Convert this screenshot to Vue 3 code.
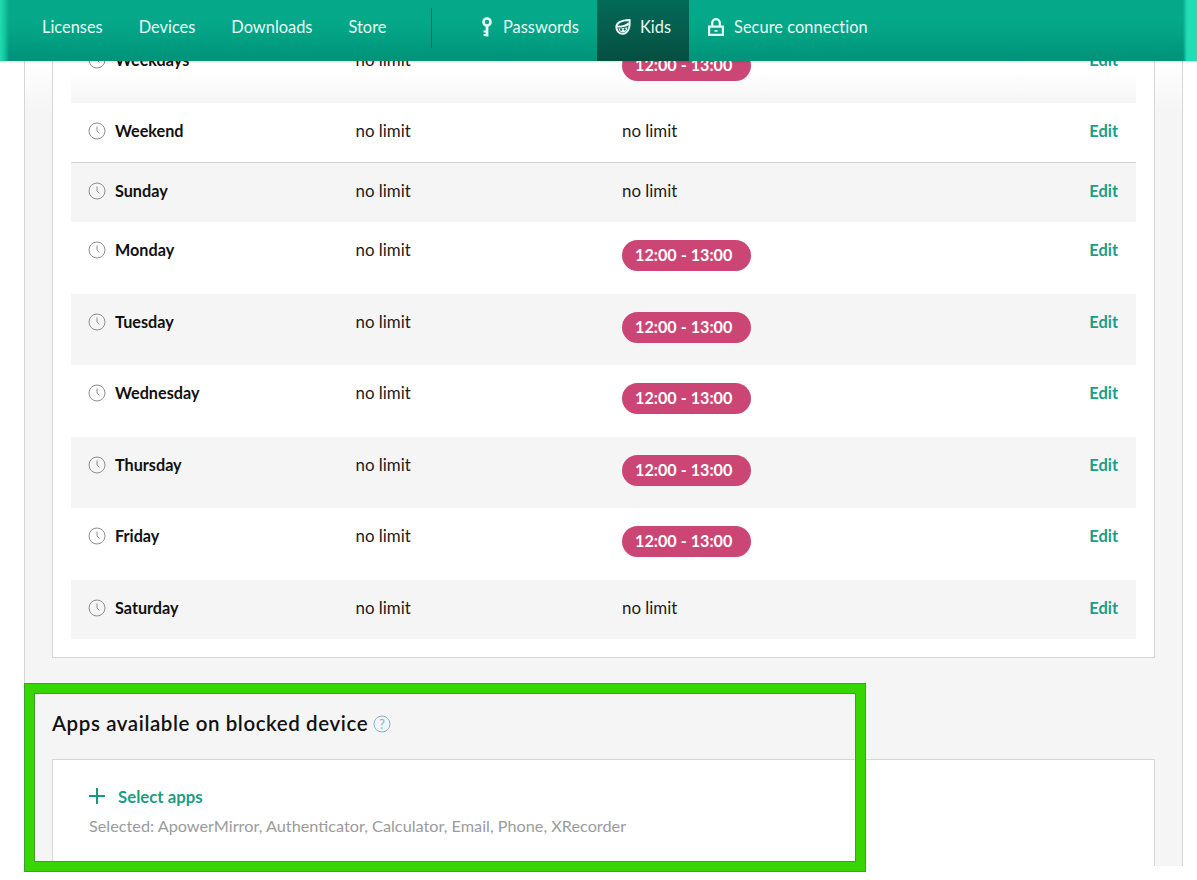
<script setup>
const rows = [
  { day: 'Weekdays', pill: true, bg: 'fade' },
  { day: 'Weekend', pill: false, bg: 'plain' },
  { day: 'Sunday', pill: false, bg: 'grey ruled' },
  { day: 'Monday', pill: true, bg: 'plain' },
  { day: 'Tuesday', pill: true, bg: 'grey' },
  { day: 'Wednesday', pill: true, bg: 'plain' },
  { day: 'Thursday', pill: true, bg: 'grey' },
  { day: 'Friday', pill: true, bg: 'plain' },
  { day: 'Saturday', pill: false, bg: 'grey' }
]
</script>

<template>
  <div class="page">
    <header class="topbar">
      <nav class="nav-main">
        <a>Licenses</a>
        <a>Devices</a>
        <a>Downloads</a>
        <a>Store</a>
      </nav>
      <span class="divider"></span>
      <nav class="nav-apps">
        <a class="app app-pass">
          <svg width="13" height="20" viewBox="0 0 13 20" fill="none" stroke="#e6fbf5">
            <circle cx="7" cy="5" r="3.500" stroke-width="2.600" />
            <path d="M7 9v10.500" stroke-width="2.800" />
            <path d="M3.500 14.500h3M3.500 18h3" stroke-width="2" />
          </svg>
          Passwords
        </a>
        <a class="app app-kids">
          <svg width="18" height="18" viewBox="0 0 18 18" fill="none">
            <path d="M1.500 9C1.500 4 6 1.500 16.500 1c.3 5 .3 8-1.300 11-1.400 2.800-3.600 4.800-6.500 4.800-4 0-7.200-3.400-7.200-7.800z" stroke="#e6fbf5" stroke-width="2.200" />
            <path d="M2 7.500c4.500.5 9.500-.5 13.500-3.800L15.800 7C12 9 7 9.800 2.500 9.500z" fill="#e6fbf5" />
            <path d="M4 10.500c3 .2 6.500-.1 10-1.200-.2 3.500-2.300 6-5 6-2.700 0-4.600-2-5-4.800z" fill="#e6fbf5" />
            <circle cx="7" cy="12" r="1.200" fill="#04604f" />
            <circle cx="11" cy="11.700" r="1.200" fill="#04604f" />
          </svg>
          Kids
        </a>
        <a class="app app-lock">
          <svg width="16" height="18" viewBox="0 0 16 18" fill="none">
            <path d="M4.200 8V5a3.800 3.800 0 0 1 7.600 0v3" stroke="#e6fbf5" stroke-width="2.300" />
            <path fill-rule="evenodd" d="M0 7.500h16V18H0zM2.200 9.700v6.100h11.600V9.700zM6.500 12h3v1.800h-3z" fill="#e6fbf5" />
          </svg>
          Secure connection
        </a>
      </nav>
    </header>

    <main class="panel">
      <section class="card schedule">
        <div v-for="row in rows" :key="row.day" class="row" :class="[row.bg, { tall: row.pill }]">
          <div class="day">
            <svg class="clock" width="18" height="18" viewBox="0 0 18 18" fill="none" stroke="#8f8f8f">
              <circle cx="9" cy="9" r="8" />
              <path d="M9 4.500V9l2.500 2.500" />
            </svg>
            {{ row.day }}
          </div>
          <div class="limit">no limit</div>
          <div class="limit">
            <span v-if="row.pill" class="pill">12:00 - 13:00</span>
            <template v-else>no limit</template>
          </div>
          <a class="edit">Edit</a>
        </div>
      </section>

      <h2 class="title">
        Apps available on blocked device
        <svg class="help" width="18" height="18" viewBox="0 0 18 18" fill="none">
          <circle cx="9" cy="9" r="8" stroke="#7db4d6" />
          <text x="9" y="13.500" text-anchor="middle" class="help-mark">?</text>
        </svg>
      </h2>

      <section class="card apps">
        <a class="select">
          <svg width="16" height="16" viewBox="0 0 16 16" stroke="#0f9c83" stroke-width="2">
            <path d="M8 0v16M0 8h16" />
          </svg>
          Select apps
        </a>
        <p class="selected">Selected: ApowerMirror, Authenticator, Calculator, Email, Phone, XRecorder</p>
      </section>
    </main>

    <div class="highlight"></div>
  </div>
</template>

<style scoped>
.page {
  position: relative;
  height: 880px;
  overflow: hidden;
  background: #fff;
  color: #111;
  font-family: Lato, "Open Sans", sans-serif;
  font-size: 16px;
}
.topbar {
  position: absolute;
  top: 0;
  left: 0;
  right: 0;
  z-index: 3;
  height: 61px;
  display: flex;
  align-items: center;
  background:
    linear-gradient(90deg, #22dcb2 0, #12c29c 5px, rgba(0,0,0,0) 9px, rgba(0,0,0,0) 1183px, #22dcb2 1187px, #22dcb2 100%),
    linear-gradient(#05a98a 0, #05a98a 20px, #00937a 100%);
  box-shadow: 0 1px 2px rgba(0, 0, 0, .15);
}
.topbar a { color: #e6fbf5; font-size: 16.400px; }
.nav-main { flex: none; display: flex; gap: 36px; width: 389px; padding: 0 0 8px 42px; box-sizing: border-box; }
.divider { flex: none; width: 1px; height: 40px; margin: -6px 0 0 42px; background: #05705e; }
.nav-apps { display: flex; align-self: stretch; }
.app { display: flex; align-items: center; gap: 10px; padding: 0 18px 8px; }
.app-pass { padding: 0 18px 8px 48px; width: 165px; box-sizing: border-box; }
.app-kids { gap: 9px; width: 92px; box-sizing: border-box; background: linear-gradient(#036a58, #064f41); }
.app-lock { padding-left: 19px; letter-spacing: .05px; }
.panel {
  box-sizing: border-box;
  width: 1159px;
  height: 866px;
  margin-left: 24px;
  padding: 0 27px;
  overflow: hidden;
  border: solid #d6d6d6;
  border-width: 0 1px;
  background: linear-gradient(#fff 61px, #f5f5f5 112px);
}
.card {
  box-sizing: border-box;
  background: #fff;
  border: 1px solid #d6d6d6;
}
.schedule {
  height: 658px;
  border-top: 0;
  padding: 31.200px 18px 0;
}
.row {
  box-sizing: border-box;
  height: 59.600px;
  display: grid;
  grid-template-columns: 266.500px 266.500px 1fr auto;
  padding: 18px 18px 0;
  line-height: 20px;
}
.row.tall { height: 71.600px; }
.row:last-child { height: 59px; }
.row.plain { background: #fff; }
.row.grey { background: #f5f5f5; }
.row.fade { padding-top: 19px; background: linear-gradient(#fff 40px, #f5f5f5 100%); }
.row.ruled { padding-top: 17.500px; border-top: 1px solid #d2d2d2; }
.day { display: flex; align-items: flex-start; gap: 9px; font-weight: 700; font-size: 16.200px; }
.clock { margin: 1px 0 0 -1px; flex: none; }
.limit { font-size: 16.900px; color: #1c1c1c; }
.pill {
  display: block;
  box-sizing: border-box;
  width: 129px;
  height: 31px;
  padding-left: 13px;
  border-radius: 16px;
  background: #cb4674;
  color: #fff;
  font-size: 16.200px;
  font-weight: 700;
  line-height: 29px;
}
.edit { color: #1d9d85; font-size: 16.400px; font-weight: 700; }
.title {
  display: flex;
  align-items: center;
  gap: 5px;
  height: 24px;
  margin: 53px 0 24px;
  font-size: 20.500px;
  font-weight: 600;
  letter-spacing: .58px;
  color: #111;
}
.help { margin-top: 2px; }
.help-mark { font-size: 13px; letter-spacing: 0; fill: #7db4d6; font-family: Lato, sans-serif; font-weight: 400; }
.apps {
  height: 120px;
  padding: 26px 36px;
  border-bottom: 0;
}
.select {
  display: flex;
  align-items: center;
  gap: 13px;
  height: 20px;
  color: #1d9d85;
  font-size: 16.800px;
  font-weight: 700;
}
.selected {
  margin: 10px 0 0;
  color: #9b9b9b;
  font-size: 16.250px;
  line-height: 20px;
}
.highlight {
  position: absolute;
  z-index: 2;
  box-sizing: border-box;
  left: 24px;
  top: 683px;
  width: 842px;
  height: 189px;
  border: 10px solid #38d600;
  outline: 1px solid #3d9e2a;
  outline-offset: -1px;
  box-shadow: inset 0 0 0 1px #3d9e2a;
}
</style>
